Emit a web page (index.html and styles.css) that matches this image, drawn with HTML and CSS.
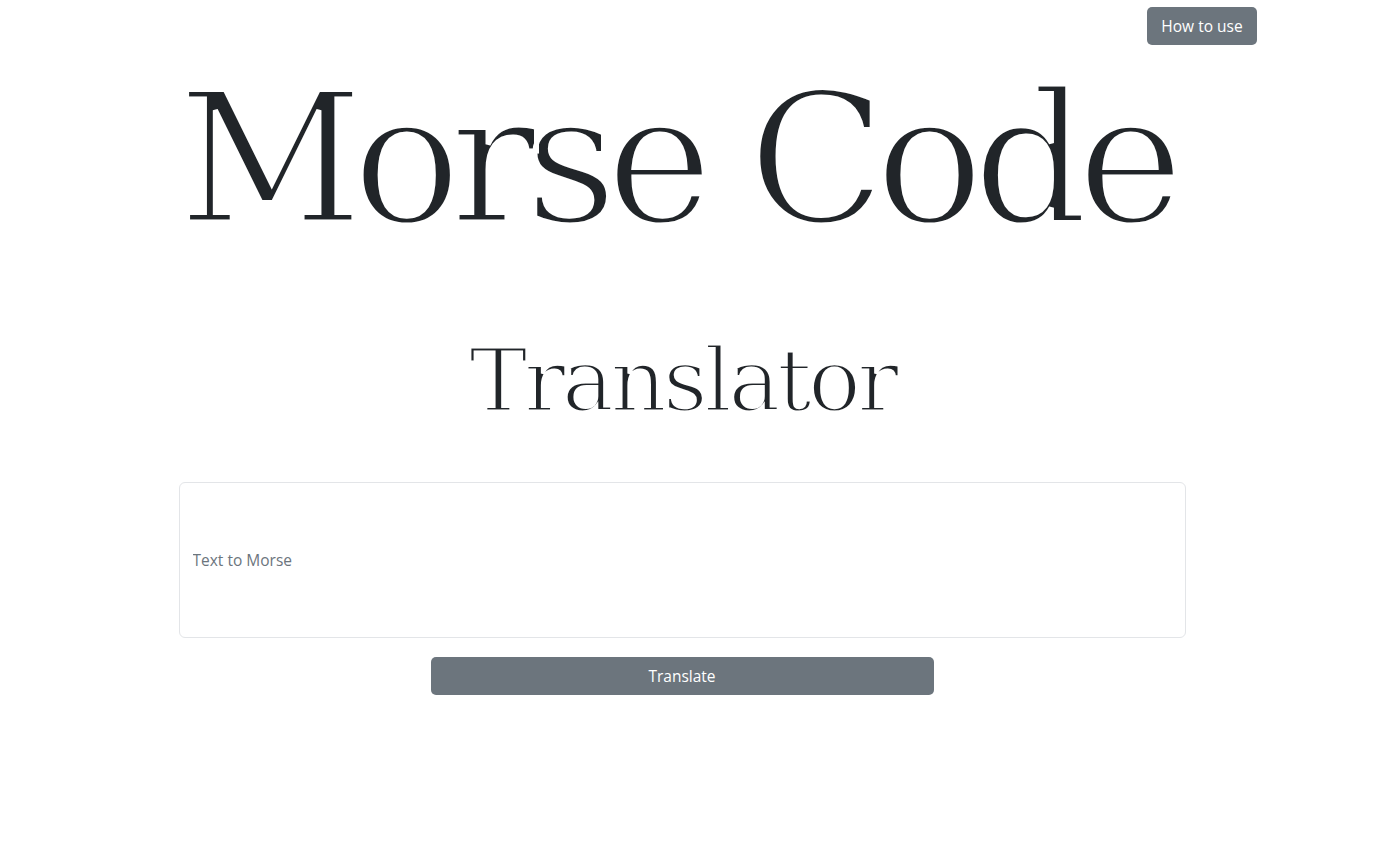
FILE: index.html
```html
<!DOCTYPE html>
<html lang="en">
<head>
<meta charset="utf-8">
<title>Morse Code Translator</title>
<link rel="stylesheet" href="styles.css">
</head>
<body>
<div class="page">
  <header class="topbar">
    <button class="btn btn-help" type="button">How to use</button>
  </header>
  <main class="main">
    <h1 class="title">Morse Code</h1>
    <h2 class="subtitle">Translator</h2>
    <input class="field" type="text" placeholder="Text to Morse">
    <button class="btn btn-wide" type="button">Translate</button>
  </main>
</div>
</body>
</html>
```

FILE: styles.css
```css
html, body {
  margin: 0;
  padding: 0;
  background: #ffffff;
}

body {
  font-family: "Open Sans", "Noto Sans", sans-serif;
  color: #212529;
}

.page {
  width: 1150px;
  margin-left: 107px;
}

.topbar {
  display: flex;
  justify-content: flex-end;
  padding-top: 7px;
}

.btn {
  font-family: "Open Sans", "Noto Sans", sans-serif;
  font-size: 15.5px;
  color: #ffffff;
  background: #6c757d;
  border: none;
  border-radius: 5px;
  height: 38px;
  padding: 0;
  cursor: pointer;
}

.btn-help {
  width: 110px;
}

.main {
  display: flex;
  flex-direction: column;
  align-items: center;
}

.title {
  font-family: "DejaVu Serif", serif;
  font-weight: 400;
  font-size: 182px;
  line-height: 1;
  letter-spacing: -12px;
  margin: 23px 0 0 -14px;
  color: #212529;
  -webkit-text-stroke: 5px #ffffff;
}

.subtitle {
  font-family: "DejaVu Serif", serif;
  font-weight: 400;
  font-size: 88px;
  line-height: 1;
  letter-spacing: -4px;
  margin: 87px 0 0;
  color: #212529;
  -webkit-text-stroke: 3px #ffffff;
}

.field {
  box-sizing: border-box;
  width: 1007px;
  height: 156px;
  margin-top: 57px;
  padding: 0 13px;
  border: 1px solid #e3e5e8;
  border-radius: 6px;
  font-family: "Open Sans", "Noto Sans", sans-serif;
  font-size: 15.5px;
  color: #212529;
  outline: none;
}

.field::placeholder {
  color: #6c757d;
}

.btn-wide {
  width: 503px;
  margin-top: 19px;
}
```
